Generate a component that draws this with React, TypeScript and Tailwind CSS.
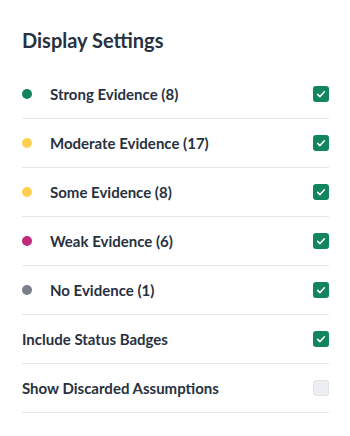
import React, { useState } from "react";

type Item = {
  label: string;
  dot?: string;
  checked: boolean;
};

const initial: Item[] = [
  { label: "Strong Evidence (8)", dot: "bg-[#12845f]", checked: true },
  { label: "Moderate Evidence (17)", dot: "bg-[#fdd04f]", checked: true },
  { label: "Some Evidence (8)", dot: "bg-[#fdd04f]", checked: true },
  { label: "Weak Evidence (6)", dot: "bg-[#c22a80]", checked: true },
  { label: "No Evidence (1)", dot: "bg-[#7b7f8b]", checked: true },
  { label: "Include Status Badges", checked: true },
  { label: "Show Discarded Assumptions", checked: false },
];

const Checkbox = ({ checked, onClick }: { checked: boolean; onClick: () => void }) => (
  <button
    onClick={onClick}
    className={
      checked
        ? "w-4 h-4 rounded-[3px] bg-[#12845f] flex items-center justify-center"
        : "w-4 h-4 rounded-[3px] bg-[#eceef1] border border-[#dfe2e6]"
    }
  >
    {checked && (
      <svg viewBox="0 0 16 16" className="w-3 h-3" fill="none" stroke="white" strokeWidth="2" strokeLinecap="round" strokeLinejoin="round">
        <path d="M3.5 8.5l3 3 6-6.5" />
      </svg>
    )}
  </button>
);

export default function App() {
  const [items, setItems] = useState(initial);

  const toggle = (i: number) =>
    setItems((prev) => prev.map((it, j) => (j === i ? { ...it, checked: !it.checked } : it)));

  return (
    <div className="w-[350px] h-[436px] bg-white px-[22px] pt-[27px] text-[#28313f]" style={{ fontFamily: "Lato, 'Noto Sans', sans-serif" }}>
      <h2 className="text-[20px] font-bold leading-[26px] mb-[17px]">Display Settings</h2>
      <div className="w-[307px]">
        {items.map((it, i) => (
          <div key={it.label} className="h-[49px] flex items-center border-b border-[#e6e7ea]">
            {it.dot && <span className={`w-[10px] h-[10px] rounded-full mr-[18px] ${it.dot}`} />}
            <span className="flex-1 text-[15px] font-bold">{it.label}</span>
            <Checkbox checked={it.checked} onClick={() => toggle(i)} />
          </div>
        ))}
      </div>
    </div>
  );
}
